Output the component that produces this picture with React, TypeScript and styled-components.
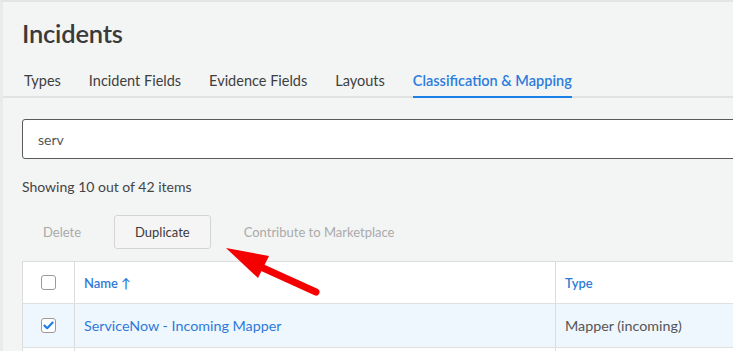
import styled, { createGlobalStyle } from 'styled-components';

const GlobalStyle = createGlobalStyle`
    html, body {
        margin: 0;
        padding: 0;
        background: #ffffff;
        font-family: Lato, 'Open Sans', sans-serif;
    }
`;

const Frame = styled.div`
    position: relative;
    width: 737px;
    height: 351px;
    padding-right: 4px;
    box-sizing: border-box;
    overflow: hidden;
    background: #ffffff;
`;

const Page = styled.div`
    height: 100%;
    background: #f3f4f4;
    border-top: 2px solid #e3e4e4;
    border-left: 3px solid #e9eaea;
    overflow: hidden;
`;

const Header = styled.div`
    padding: 16px 0 0 19px;
`;

const Title = styled.h1`
    margin: 0;
    font-size: 25.5px;
    line-height: 30px;
    font-weight: 600;
    color: #3a3a3a;
    letter-spacing: -0.2px;
`;

const TabBar = styled.div`
    display: flex;
    gap: 28px;
    margin-top: 23px;
    padding-left: 21px;
    border-bottom: 2px solid #e1e2e2;
`;

const Tab = styled.div<{ active?: boolean }>`
    font-size: 14.5px;
    line-height: 20px;
    padding-bottom: 5px;
    margin-bottom: -2px;
    color: ${({ active }) => (active ? '#2c7cdc' : '#3e3e3e')};
    font-weight: ${({ active }) => (active ? 600 : 400)};
    border-bottom: 2px solid
        ${({ active }) => (active ? '#1b81e8' : 'transparent')};
`;

const Body = styled.div`
    padding: 21px 0 0 19px;
`;

const SearchBox = styled.div`
    height: 38px;
    margin-right: -20px;
    border: 1px solid #5a5a5a;
    border-radius: 3px;
    background: #ffffff;
    display: flex;
    align-items: center;
    padding-left: 15px;
    font-size: 14px;
    color: #555555;
`;

const Summary = styled.div`
    margin-top: 18px;
    font-size: 14px;
    line-height: 20px;
    color: #444444;
`;

const ActionRow = styled.div`
    display: flex;
    align-items: center;
    margin-top: 18px;
    height: 34px;
`;

const ActionButton = styled.button<{ outlined?: boolean }>`
    height: 34px;
    font-family: inherit;
    font-size: 13px;
    background: ${({ outlined }) => (outlined ? '#f5f5f5' : 'transparent')};
    border: 1px solid ${({ outlined }) => (outlined ? '#d4d4d4' : 'transparent')};
    border-radius: 3px;
    color: ${({ outlined }) => (outlined ? '#3a3a3a' : '#aaaaaa')};
    padding: 0 20px;
    margin-right: 12px;
`;

const Table = styled.div`
    margin-top: 12px;
    margin-right: -20px;
    border-top: 1px solid #dcdcdc;
    border-left: 1px solid #dcdcdc;
    background: #ffffff;
`;

const TableRow = styled.div<{ selected?: boolean; height: number }>`
    display: grid;
    grid-template-columns: 52px 481px 1fr;
    height: ${({ height }) => height}px;
    border-bottom: 1px solid #dfe0e0;
    background: ${({ selected }) => (selected ? '#eef6fe' : '#ffffff')};
`;

const Cell = styled.div<{ head?: boolean; link?: boolean }>`
    display: flex;
    align-items: center;
    padding-left: 9px;
    border-right: 1px solid #dcdcdc;
    font-size: ${({ head }) => (head ? '13px' : '14.3px')};
    font-weight: ${({ head }) => (head ? 600 : 400)};
    color: ${({ head, link }) => (head || link ? '#2f7ad8' : '#555555')};
`;

const CheckCell = styled.div`
    display: flex;
    align-items: center;
    justify-content: center;
    border-right: 1px solid #dcdcdc;
`;

const CheckBox = styled.div`
    width: 13px;
    height: 13px;
    border: 1px solid #9a9a9a;
    border-radius: 3px;
    background: #ffffff;
    display: flex;
    align-items: center;
    justify-content: center;
`;

const Arrow = styled.svg`
    position: absolute;
    left: 0;
    top: 0;
    pointer-events: none;
`;

const Check = () => (
    <svg width="11" height="9" viewBox="0 0 11 9">
        <path
            d="M1.5 4.6 L4.2 7.2 L9.6 1.6"
            fill="none"
            stroke="#1f7fe6"
            strokeWidth="2.2"
            strokeLinecap="round"
            strokeLinejoin="round"
        />
    </svg>
);

const tabs = [
    'Types',
    'Incident Fields',
    'Evidence Fields',
    'Layouts',
    'Classification & Mapping',
];

const App = () => {
    return (
        <Frame>
            <GlobalStyle />
            <Page>
                <Header>
                    <Title>Incidents</Title>
                </Header>
                <TabBar>
                    {tabs.map((t) => (
                        <Tab key={t} active={t === 'Classification & Mapping'}>
                            {t}
                        </Tab>
                    ))}
                </TabBar>
                <Body>
                    <SearchBox>serv</SearchBox>
                    <Summary>Showing 10 out of 42 items</Summary>
                    <ActionRow>
                        <ActionButton>Delete</ActionButton>
                        <ActionButton outlined>Duplicate</ActionButton>
                        <ActionButton>Contribute to Marketplace</ActionButton>
                    </ActionRow>
                    <Table>
                        <TableRow height={41}>
                            <CheckCell>
                                <CheckBox />
                            </CheckCell>
                            <Cell head>Name ↑</Cell>
                            <Cell head>Type</Cell>
                        </TableRow>
                        <TableRow height={43} selected>
                            <CheckCell>
                                <CheckBox>
                                    <Check />
                                </CheckBox>
                            </CheckCell>
                            <Cell link>ServiceNow - Incoming Mapper</Cell>
                            <Cell>Mapper (incoming)</Cell>
                        </TableRow>
                        <TableRow height={40}>
                            <CheckCell />
                            <Cell />
                            <Cell />
                        </TableRow>
                    </Table>
                </Body>
            </Page>
            {/* annotation arrow */}
            <Arrow width="737" height="351" viewBox="0 0 737 351">
                <line
                    x1="316"
                    y1="292"
                    x2="252"
                    y2="263"
                    stroke="#f40000"
                    strokeWidth="7"
                    strokeLinecap="round"
                />
                <polygon points="226,248 269,256 258,278" fill="#f40000" />
            </Arrow>
        </Frame>
    );
};

export default App;
